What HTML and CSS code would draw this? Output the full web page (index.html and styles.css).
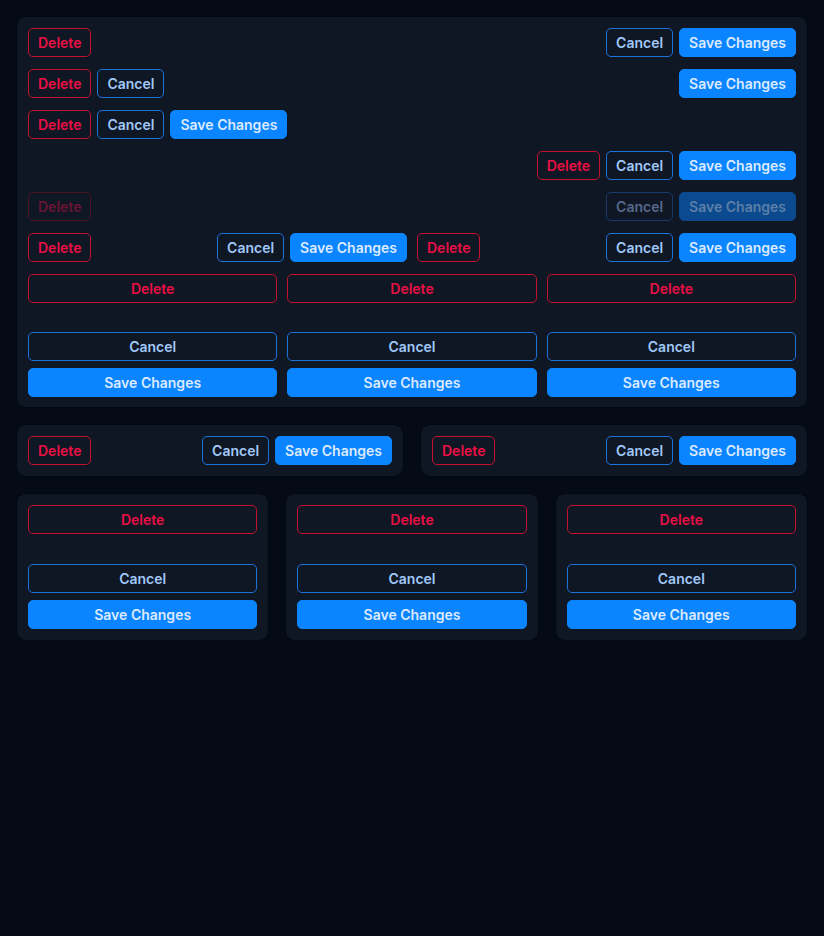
FILE: index.html
```html
<!DOCTYPE html>
<html>
<head>
<meta charset="utf-8">
<link rel="stylesheet" href="styles.css">
</head>
<body>
<div class="page">
  <div class="panel main">
    <div class="row">
      <button class="btn del">Delete</button>
      <div class="grow"></div>
      <button class="btn cancel">Cancel</button>
      <button class="btn save">Save Changes</button>
    </div>
    <div class="row">
      <button class="btn del">Delete</button>
      <button class="btn cancel">Cancel</button>
      <div class="grow"></div>
      <button class="btn save">Save Changes</button>
    </div>
    <div class="row">
      <button class="btn del">Delete</button>
      <button class="btn cancel">Cancel</button>
      <button class="btn save">Save Changes</button>
    </div>
    <div class="row">
      <div class="grow"></div>
      <button class="btn del">Delete</button>
      <button class="btn cancel">Cancel</button>
      <button class="btn save">Save Changes</button>
    </div>
    <div class="row">
      <button class="btn del" disabled>Delete</button>
      <div class="grow"></div>
      <button class="btn cancel" disabled>Cancel</button>
      <button class="btn save" disabled>Save Changes</button>
    </div>
    <div class="halves">
      <div class="row">
        <button class="btn del">Delete</button>
        <div class="grow"></div>
        <button class="btn cancel">Cancel</button>
        <button class="btn save">Save Changes</button>
      </div>
      <div class="row">
        <button class="btn del">Delete</button>
        <div class="grow"></div>
        <button class="btn cancel">Cancel</button>
        <button class="btn save">Save Changes</button>
      </div>
    </div>
    <div class="thirds">
      <div class="stack">
        <button class="btn del">Delete</button>
        <div class="spacer"></div>
        <button class="btn cancel">Cancel</button>
        <button class="btn save">Save Changes</button>
      </div>
      <div class="stack">
        <button class="btn del">Delete</button>
        <div class="spacer"></div>
        <button class="btn cancel">Cancel</button>
        <button class="btn save">Save Changes</button>
      </div>
      <div class="stack">
        <button class="btn del">Delete</button>
        <div class="spacer"></div>
        <button class="btn cancel">Cancel</button>
        <button class="btn save">Save Changes</button>
      </div>
    </div>
  </div>

  <div class="cards two">
    <div class="panel">
      <div class="row">
        <button class="btn del">Delete</button>
        <div class="grow"></div>
        <button class="btn cancel">Cancel</button>
        <button class="btn save">Save Changes</button>
      </div>
    </div>
    <div class="panel">
      <div class="row">
        <button class="btn del">Delete</button>
        <div class="grow"></div>
        <button class="btn cancel">Cancel</button>
        <button class="btn save">Save Changes</button>
      </div>
    </div>
  </div>

  <div class="cards three">
    <div class="panel">
      <div class="stack">
        <button class="btn del">Delete</button>
        <div class="spacer"></div>
        <button class="btn cancel">Cancel</button>
        <button class="btn save">Save Changes</button>
      </div>
    </div>
    <div class="panel">
      <div class="stack">
        <button class="btn del">Delete</button>
        <div class="spacer"></div>
        <button class="btn cancel">Cancel</button>
        <button class="btn save">Save Changes</button>
      </div>
    </div>
    <div class="panel">
      <div class="stack">
        <button class="btn del">Delete</button>
        <div class="spacer"></div>
        <button class="btn cancel">Cancel</button>
        <button class="btn save">Save Changes</button>
      </div>
    </div>
  </div>
</div>
</body>
</html>
```

FILE: styles.css
```css
html, body {
  margin: 0;
  padding: 0;
  background: #040a16;
  font-family: Inter, "Noto Sans", "Liberation Sans", sans-serif;
}
.page {
  padding: 16px;
  display: flex;
  flex-direction: column;
  gap: 16px;
}
.panel {
  background: #0f1724;
  border: 1px solid #03070f;
  border-radius: 10px;
  padding: 11px;
}
.main {
  display: flex;
  flex-direction: column;
  gap: 12px;
  padding-bottom: 10px;
}
.row {
  display: flex;
  align-items: center;
  gap: 6px;
}
.grow { flex: 1; }
.halves {
  display: grid;
  grid-template-columns: 1fr 1fr;
  gap: 10px;
}
.thirds {
  display: grid;
  grid-template-columns: 1fr 1fr 1fr;
  gap: 10px;
}
.stack {
  display: flex;
  flex-direction: column;
  gap: 6px;
}
.stack .save { margin-top: 1px; }
.spacer { height: 17px; }
.cards {
  display: grid;
  gap: 16px;
}
.cards.two { grid-template-columns: 1fr 1fr; }
.cards.three { grid-template-columns: 1fr 1fr 1fr; }
.cards.three .spacer { height: 18px; }

.btn {
  font-family: inherit;
  font-size: 14px;
  font-weight: 600;
  line-height: 17px;
  height: 29px;
  padding: 5px 9px;
  border-radius: 5px;
  border: 1px solid transparent;
  background: transparent;
  white-space: nowrap;
  cursor: pointer;
}
.del {
  color: #eb0f45;
  border-color: #c4102e;
}
.cancel {
  color: #a0c8f8;
  border-color: #1b73dc;
}
.save {
  color: #dbeaff;
  background: #0a84ff;
  border-color: #0a84ff;
}
.del:disabled {
  color: #6a1433;
  border-color: #4c1124;
}
.cancel:disabled {
  color: #56688a;
  border-color: #173a68;
}
.save:disabled {
  color: #5c7fa8;
  background: #0b4a8e;
  border-color: #0b4a8e;
}
```
